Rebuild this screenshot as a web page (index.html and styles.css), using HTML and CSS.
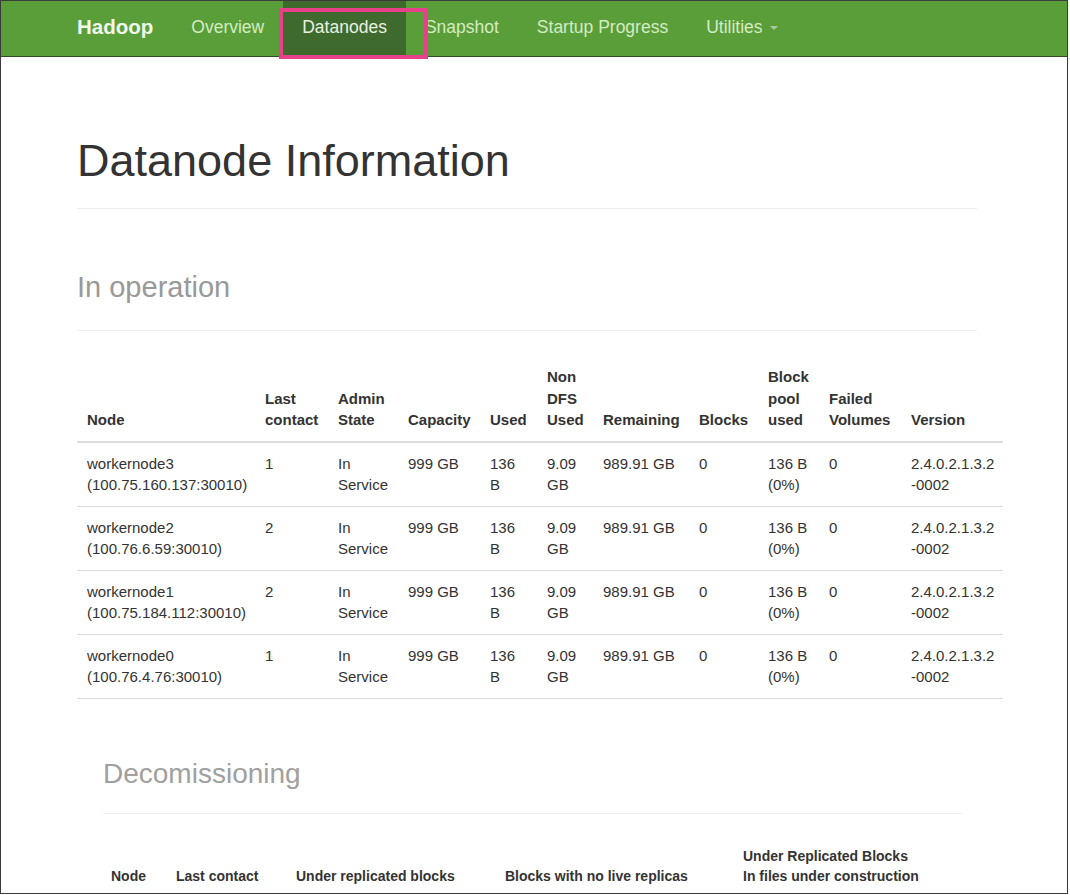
FILE: index.html
```html
<!DOCTYPE html>
<html lang="en">
<head>
  <meta charset="UTF-8">
  <meta name="viewport" content="width=device-width, initial-scale=1.0">
  <title>Namenode information - Datanodes</title>
  <link rel="stylesheet" href="styles.css">
</head>
<body>
<div class="frame">
  <nav class="navbar">
    <div class="navbar-inner">
      <span class="brand">Hadoop</span>
      <ul class="nav">
        <li><a href="#">Overview</a></li>
        <li class="active"><a href="#">Datanodes</a></li>
        <li><a href="#">Snapshot</a></li>
        <li><a href="#">Startup Progress</a></li>
        <li><a href="#">Utilities <span class="caret"></span></a></li>
      </ul>
    </div>
    <div class="highlight"></div>
  </nav>

  <div class="container">
    <div class="page-header title">
      <h1>Datanode Information</h1>
    </div>

    <div class="page-header section first">
      <h1>In operation</h1>
    </div>

    <table class="table nodes">
      <colgroup>
        <col class="w-node"><col class="w-contact"><col class="w-state"><col class="w-cap">
        <col class="w-used"><col class="w-nondfs"><col class="w-rem"><col class="w-blocks">
        <col class="w-pool"><col class="w-failed"><col class="w-version">
      </colgroup>
      <thead>
        <tr>
          <th>Node</th>
          <th>Last contact</th>
          <th>Admin State</th>
          <th>Capacity</th>
          <th>Used</th>
          <th>Non DFS Used</th>
          <th>Remaining</th>
          <th>Blocks</th>
          <th>Block pool used</th>
          <th>Failed Volumes</th>
          <th>Version</th>
        </tr>
      </thead>
      <tbody>
        <tr>
          <td>workernode3 (100.75.160.137:30010)</td>
          <td>1</td>
          <td>In Service</td>
          <td>999 GB</td>
          <td>136 B</td>
          <td>9.09 GB</td>
          <td>989.91 GB</td>
          <td>0</td>
          <td>136 B (0%)</td>
          <td>0</td>
          <td>2.4.0.2.1.3.2<wbr>-0002</td>
        </tr>
        <tr>
          <td>workernode2 (100.76.6.59:30010)</td>
          <td>2</td>
          <td>In Service</td>
          <td>999 GB</td>
          <td>136 B</td>
          <td>9.09 GB</td>
          <td>989.91 GB</td>
          <td>0</td>
          <td>136 B (0%)</td>
          <td>0</td>
          <td>2.4.0.2.1.3.2<wbr>-0002</td>
        </tr>
        <tr>
          <td>workernode1 (100.75.184.112:30010)</td>
          <td>2</td>
          <td>In Service</td>
          <td>999 GB</td>
          <td>136 B</td>
          <td>9.09 GB</td>
          <td>989.91 GB</td>
          <td>0</td>
          <td>136 B (0%)</td>
          <td>0</td>
          <td>2.4.0.2.1.3.2<wbr>-0002</td>
        </tr>
        <tr>
          <td>workernode0 (100.76.4.76:30010)</td>
          <td>1</td>
          <td>In Service</td>
          <td>999 GB</td>
          <td>136 B</td>
          <td>9.09 GB</td>
          <td>989.91 GB</td>
          <td>0</td>
          <td>136 B (0%)</td>
          <td>0</td>
          <td>2.4.0.2.1.3.2<wbr>-0002</td>
        </tr>
      </tbody>
    </table>

    <div class="decom">
      <div class="page-header section">
        <h1>Decomissioning</h1>
      </div>
      <table class="table small">
        <colgroup>
          <col class="d-node"><col class="d-contact"><col class="d-under">
          <col class="d-nolive"><col class="d-construct">
        </colgroup>
        <thead>
          <tr>
            <th>Node</th>
            <th>Last contact</th>
            <th>Under replicated blocks</th>
            <th>Blocks with no live replicas</th>
            <th>Under Replicated Blocks<br>In files under construction</th>
          </tr>
        </thead>
        <tbody>
          <tr>
            <td></td><td></td><td></td><td></td><td></td>
          </tr>
        </tbody>
      </table>
    </div>
  </div>
</div>
</body>
</html>
```

FILE: styles.css
```css
body { margin: 0; font-family: "Liberation Sans", Arial, sans-serif; color: #333; background: #fff; }
.frame { width: 1068px; height: 894px; box-sizing: border-box; border: 1px solid #3b3b3b; overflow: hidden; }

/* top bar */
.navbar { position: relative; height: 55px; background: #5a9e3a; border-bottom: 1px solid #2f4d25; }
.navbar-inner { display: flex; height: 100%; margin-left: 76px; }
.brand { font-size: 20.5px; font-weight: bold; color: #f1f7ea; padding-right: 19px; line-height: 52px; }
.nav { display: flex; list-style: none; margin: 0; padding: 0; }
.nav a { display: block; height: 100%; padding: 0 19px; font-size: 17.5px; line-height: 52px; color: #d4ebc4; text-decoration: none; }
.nav .active a { background: #3e6b2d; color: #e9f0e2; }
.caret { display: inline-block; width: 0; height: 0; margin-left: 3px; vertical-align: middle; border-top: 4px solid #a9c99a; border-left: 4px solid transparent; border-right: 4px solid transparent; }
.highlight { position: absolute; left: 278px; top: 7px; width: 149px; height: 51px; box-sizing: border-box; border: 4px solid #e9408b; }

/* page */
.container { width: 900px; margin-left: 76px; }
.page-header { border-bottom: 1px solid #eee; }
.page-header h1 { margin: 0; font-weight: normal; }
.title { margin-top: 79px; padding-bottom: 22px; }
.title h1 { font-size: 45px; line-height: 50px; color: #333; }
.section h1 { font-size: 29px; line-height: 32px; color: #999; }
.section.first { margin-top: 62px; padding-bottom: 27px; }

.table { border-collapse: separate; border-spacing: 0; table-layout: fixed; text-align: left; }
.nodes { width: 926px; margin-top: 25px; font-size: 15px; line-height: 21.5px; }
.nodes th, .nodes td { padding: 10px; }
.nodes th { vertical-align: bottom; font-weight: bold; border-bottom: 2px solid #ddd; }
.nodes td { vertical-align: top; border-bottom: 1px solid #ddd; }

.w-node { width: 178px; }
.w-contact { width: 73px; }
.w-state { width: 70px; }
.w-cap { width: 82px; }
.w-used { width: 57px; }
.w-nondfs { width: 56px; }
.w-rem { width: 96px; }
.w-blocks { width: 69px; }
.w-pool { width: 61px; }
.w-failed { width: 82px; }
.w-version { width: 102px; }

.decom { margin: 59px 15px 0 26px; }
.decom .section { padding-bottom: 24px; }
.decom .section h1 { font-size: 28px; line-height: 31px; color: #a0a0a0; }
.small { width: 100%; margin-top: 24px; font-size: 14px; line-height: 20px; }
.small th, .small td { padding: 8px; }
.small th { vertical-align: bottom; border-bottom: 2px solid #ddd; }
.small td { height: 20px; border-bottom: 1px solid #ddd; }

.d-node { width: 65px; }
.d-contact { width: 120px; }
.d-under { width: 209px; }
.d-nolive { width: 238px; }
.d-construct { width: 227px; }
```
